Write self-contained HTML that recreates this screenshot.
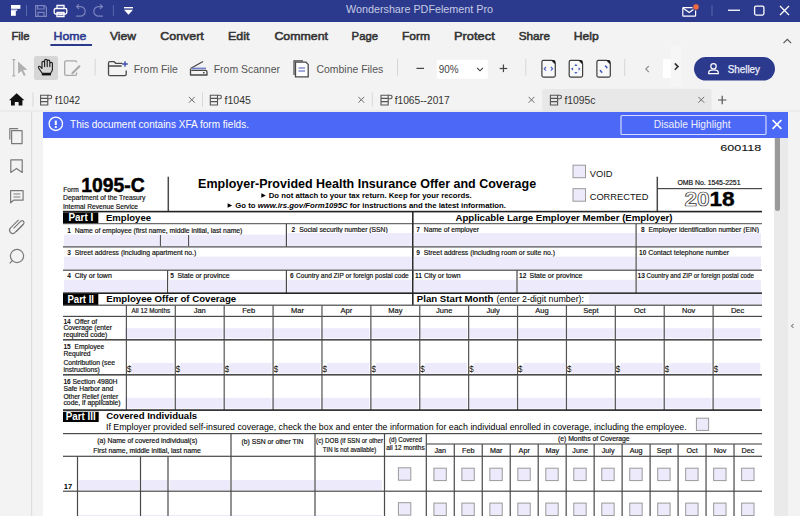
<!DOCTYPE html>
<html><head><meta charset="utf-8"><title>PDFelement</title><style>html,body{margin:0;padding:0;width:800px;height:516px;overflow:hidden;background:#f3f3f3;font-family:"Liberation Sans",sans-serif}</style></head><body><svg width="800" height="516" viewBox="0 0 800 516" style="display:block" font-family='"Liberation Sans", sans-serif'><rect x="0" y="0" width="800" height="516" fill="#f3f3f3" />
<rect x="0" y="0" width="800" height="22" fill="#2c3a8e" />
<rect x="11" y="5" width="9.4" height="3.8" fill="#fff" />
<rect x="11" y="9.6" width="6.2" height="1.2" fill="#fff" />
<rect x="11" y="10.8" width="4.8" height="5" fill="#fff" />
<rect x="26.0" y="5" width="1" height="11" fill="#5b65a9" />
<g fill="none" stroke="#7b83bd" stroke-width="1.2"><path d="M35.6 5.6h9l1.8 1.8v9h-10.8z"/><path d="M37.6 5.6v3.4h6.4v-3.4"/><path d="M38 16.4v-4h6v4"/></g>
<g fill="none" stroke="#fff" stroke-width="1.3"><path d="M57 8.5v-3h7v3"/><rect x="54.2" y="8.5" width="12.6" height="5.5" rx="1.5"/><path d="M57 12.5h7v4h-7z"/></g>
<rect x="58.5" y="14" width="4" height="1.2" fill="#fff" />
<g fill="none" stroke="#7b83bd" stroke-width="1.2" stroke-linecap="round" stroke-linejoin="round"><path d="M76.6 6.6H80.4A4.8 4.8 0 0 1 80.4 16.2H76.6"/><path d="M78.6 4.6L76.6 6.6L78.6 8.6"/><path d="M102.4 6.6H98.6A4.8 4.8 0 0 0 98.6 16.2H102.4"/><path d="M100.4 4.6L102.4 6.6L100.4 8.6"/></g>
<rect x="112.9" y="5" width="1" height="11" fill="#5b65a9" />
<rect x="124" y="7" width="9" height="1.4" fill="#fff" />
<path d="M124 9.8h9l-4.5 5z" fill="#fff"/>
<text x="346" y="13.3" font-size="11.5" fill="#c6cae3" textLength="147" lengthAdjust="spacingAndGlyphs">Wondershare PDFelement Pro</text>
<g fill="none" stroke="#fff" stroke-width="1.2"><rect x="682.8" y="7.6" width="12.8" height="8.6" rx="0.6"/><path d="M683.2 8.2l6 4.4 6-4.4"/></g>
<circle cx="696" cy="7" r="3.2" fill="#f46a3d" stroke="#2c3a8e" stroke-width="0.8"/>
<rect x="711.5" y="5" width="1" height="11" fill="#5b65a9" />
<rect x="728" y="9.6" width="12" height="1.3" fill="#fff" />
<rect x="754.6" y="6.1" width="9.3" height="9" rx="1.5" fill="none" stroke="#fff" stroke-width="1.3"/>
<path d="M780 6l9 9M789 6l-9 9" stroke="#fff" stroke-width="1.3"/>
<text x="11.4" y="39.6" font-size="11.8" fill="#333" textLength="18.2" lengthAdjust="spacingAndGlyphs" style="stroke:#333;stroke-width:0.55">File</text>
<text x="53.6" y="39.6" font-size="11.8" fill="#2c3a8e" textLength="32.8" lengthAdjust="spacingAndGlyphs" style="stroke:#2c3a8e;stroke-width:0.55">Home</text>
<text x="110" y="39.6" font-size="11.8" fill="#333" textLength="26" lengthAdjust="spacingAndGlyphs" style="stroke:#333;stroke-width:0.55">View</text>
<text x="160.3" y="39.6" font-size="11.8" fill="#333" textLength="43.5" lengthAdjust="spacingAndGlyphs" style="stroke:#333;stroke-width:0.55">Convert</text>
<text x="228" y="39.6" font-size="11.8" fill="#333" textLength="21.4" lengthAdjust="spacingAndGlyphs" style="stroke:#333;stroke-width:0.55">Edit</text>
<text x="274.4" y="39.6" font-size="11.8" fill="#333" textLength="53.6" lengthAdjust="spacingAndGlyphs" style="stroke:#333;stroke-width:0.55">Comment</text>
<text x="351.6" y="39.6" font-size="11.8" fill="#333" textLength="26.4" lengthAdjust="spacingAndGlyphs" style="stroke:#333;stroke-width:0.55">Page</text>
<text x="402" y="39.6" font-size="11.8" fill="#333" textLength="28" lengthAdjust="spacingAndGlyphs" style="stroke:#333;stroke-width:0.55">Form</text>
<text x="454" y="39.6" font-size="11.8" fill="#333" textLength="40.7" lengthAdjust="spacingAndGlyphs" style="stroke:#333;stroke-width:0.55">Protect</text>
<text x="518.75" y="39.6" font-size="11.8" fill="#333" textLength="31.25" lengthAdjust="spacingAndGlyphs" style="stroke:#333;stroke-width:0.55">Share</text>
<text x="573.75" y="39.6" font-size="11.8" fill="#333" textLength="25" lengthAdjust="spacingAndGlyphs" style="stroke:#333;stroke-width:0.55">Help</text>
<rect x="50.4" y="44" width="41.6" height="2" fill="#2c3a8e" />
<path d="M783.5 43.2l3.8-3.8 3.8 3.8" fill="none" stroke="#555" stroke-width="1.2"/>
<g fill="none" stroke="#b0b0b0" stroke-width="1.2"><path d="M12.3 59.6h3M13.8 59.6v16.2M12.3 75.8h3"/></g>
<path d="M18 61.5l9.3 8.3-4.2 0.3 2.6 5-1.8 0.9-2.5-5.1-3.3 2.8z" fill="#b0b0b0"/>
<rect x="34" y="56" width="24" height="24" rx="2" fill="#d6d6d6"/>
<path d="M42.2 73.3C41 71.5 38.6 68.6 38.4 67.4C38.3 66.3 39.4 65.9 40.2 66.6L42 68.4V62.6A1.3 1.3 0 0 1 44.6 62.6V66.6V60.6A1.3 1.3 0 0 1 47.2 60.6V66.6V61.4A1.3 1.3 0 0 1 49.8 61.4V66.6V63.6A1.3 1.3 0 0 1 52.4 63.6V69.3C52.4 71 51.6 72.2 50.6 73.3Z" fill="none" stroke="#1e1e1e" stroke-width="1.15" stroke-linejoin="round"/>
<rect x="41.8" y="73.6" width="9.2" height="1.8" fill="#111" />
<path d="M76.6 62.6V62.2Q76.6 60.9 75.3 60.9H66Q64.7 60.9 64.7 62.2V74.1Q64.7 75.4 66 75.4H75.3Q76.6 75.4 76.6 74.1V72.4" fill="none" stroke="#a8a8a8" stroke-width="1.3"/>
<path d="M72.4 73.2L79.4 66.2" stroke="#a8a8a8" stroke-width="2" stroke-linecap="round"/>
<rect x="94.7" y="59" width="1" height="16.5" fill="#d6d6d6" />
<g fill="none" stroke="#484848" stroke-width="1.3" stroke-linejoin="round"><path d="M109.8 75.6Q108.5 75.6 108.5 74.3V63Q108.5 61.7 109.8 61.7H114.1L115.6 63.3H122.4"/><path d="M108.5 66H121.7M126.2 70.5V74.3Q126.2 75.6 124.9 75.6H109.8"/></g>
<path d="M125 61.2v5.6M122.2 64h5.6" stroke="#3e4fb0" stroke-width="1.4"/>
<text x="133.75" y="73" font-size="10.6" fill="#555" textLength="44" lengthAdjust="spacingAndGlyphs">From File</text>
<g fill="none" stroke="#484848" stroke-width="1.3" stroke-linejoin="round"><path d="M190.5 68.5l12.5-7"/><path d="M190.5 69v6h16.5v-3c0-1-0.6-1.6-1.6-1.6h-14"/></g>
<rect x="192" y="67.6" width="14" height="1.6" fill="#6f7fc9" />
<rect x="203" y="72" width="1.6" height="1.4" fill="#484848" />
<text x="213.7" y="73" font-size="10.6" fill="#555" textLength="66.3" lengthAdjust="spacingAndGlyphs">From Scanner</text>
<g fill="none" stroke="#484848" stroke-width="1.2"><path d="M294 75v-14.2h9"/></g>
<path d="M295.5 76.8v-14.6h10.5l2.2 2.2v12.4z" fill="#fff" stroke="#484848" stroke-width="1.3"/>
<path d="M298.5 68h6.5M298.5 71h6.5" stroke="#4456b6" stroke-width="1.1"/>
<text x="316.5" y="73" font-size="10.6" fill="#555" textLength="66.7" lengthAdjust="spacingAndGlyphs">Combine Files</text>
<rect x="397.0" y="59" width="1" height="16.5" fill="#d6d6d6" />
<rect x="416.5" y="67.8" width="7.5" height="1.2" fill="#444" />
<rect x="436.7" y="59.7" width="51" height="19.1" fill="#fff" />
<text x="438.7" y="73" font-size="10.4" fill="#444" textLength="19.8" lengthAdjust="spacingAndGlyphs">90%</text>
<path d="M477.2 68l2.8 2.8 2.8-2.8" fill="none" stroke="#444" stroke-width="1.1"/>
<rect x="499.7" y="67.9" width="7.5" height="1.2" fill="#444" />
<rect x="502.85" y="64.5" width="1.2" height="7.6" fill="#444" />
<rect x="525.3" y="59" width="1" height="16.5" fill="#d6d6d6" />
<path d="M543.4000000000001 60.4H551.8000000000001L555.3000000000001 63.9V75.6Q555.3000000000001 77.1 553.8000000000001 77.1H543.4000000000001Q541.9000000000001 77.1 541.9000000000001 75.6V61.9Q541.9000000000001 60.4 543.4000000000001 60.4Z" fill="#f8f8f8" stroke="#3d3d3d" stroke-width="1.2" stroke-linejoin="round"/>
<path d="M551.6 60.1L555.6 64.1V62.4Q555.6 60.1 553.3000000000001 60.1Z" fill="#111"/>
<path d="M570.7 60.4H579.1L582.6 63.9V75.6Q582.6 77.1 581.1 77.1H570.7Q569.2 77.1 569.2 75.6V61.9Q569.2 60.4 570.7 60.4Z" fill="#f8f8f8" stroke="#3d3d3d" stroke-width="1.2" stroke-linejoin="round"/>
<path d="M578.9 60.1L582.9 64.1V62.4Q582.9 60.1 580.6 60.1Z" fill="#111"/>
<path d="M598.4000000000001 60.4H606.8000000000001L610.3000000000001 63.9V75.6Q610.3000000000001 77.1 608.8000000000001 77.1H598.4000000000001Q596.9000000000001 77.1 596.9000000000001 75.6V61.9Q596.9000000000001 60.4 598.4000000000001 60.4Z" fill="#f8f8f8" stroke="#3d3d3d" stroke-width="1.2" stroke-linejoin="round"/>
<path d="M606.6 60.1L610.6 64.1V62.4Q610.6 60.1 608.3000000000001 60.1Z" fill="#111"/>
<path d="M546.0 67l-1.8 1.8 1.8 1.8M550.8000000000001 67l1.8 1.8-1.8 1.8" fill="none" stroke="#4a5cc0" stroke-width="1.1"/>
<path d="M575.9 63.7l1.6 2.2h-3.2zM575.9 74.1l1.6-2.2h-3.2zM570.9 68.9l2.2-1.6v3.2zM580.7 68.9l-2.2-1.6v3.2z" fill="#4a5cc0"/>
<path d="M605.0 65.7A3.9 3.9 0 0 1 607.1 68.3M602.3000000000001 72.6A3.9 3.9 0 0 1 600.2 70" fill="none" stroke="#4a5cc0" stroke-width="1.6"/>
<rect x="624.2" y="59" width="1" height="17" fill="#d6d6d6" />
<path d="M648.8 66l-3 3 3 3" fill="none" stroke="#8f8f8f" stroke-width="1.1"/>
<rect x="671" y="45.5" width="10" height="41.5" fill="#f6f6f6" />
<rect x="663" y="59" width="8" height="19" fill="#fff" />
<path d="M674.8 63.4l3.2 3.2-3.2 3.2" fill="none" stroke="#333" stroke-width="1.6"/>
<rect x="694" y="57" width="81" height="23.6" rx="11.8" fill="#2c3a8e"/>
<g fill="none" stroke="#fff" stroke-width="1.2"><circle cx="713.5" cy="66.3" r="2.7"/><path d="M708.7 73.6v-1.2c0-1.6 2-2.6 4.8-2.6s4.8 1 4.8 2.6v1.2z"/></g>
<text x="727.7" y="72.7" font-size="10.8" fill="#eef0fa" textLength="32.3" lengthAdjust="spacingAndGlyphs" style="stroke:#eef0fa;stroke-width:0.25">Shelley</text>
<rect x="542.2" y="89" width="169.3" height="24" fill="#e8e8e8" rx="3"/>
<rect x="0" y="110.5" width="800" height="1" fill="#e3e3e3" />
<path d="M9 100.2l7.7-6.9 7.7 6.9h-2v5.3h-3.8v-3.6h-3.8v3.6h-3.8v-5.3z" fill="#111"/>
<rect x="32.5" y="92.5" width="1" height="14.299999999999997" fill="#d8d8d8" />
<g fill="none" stroke="#555" stroke-width="1.1"><path d="M40.6 95.3h7.2v9.7h-7.2z"/><path d="M40.6 98.4h7.2M40.6 101.6h7.2"/><path d="M47.8 95.3h2.2a1.7 1.7 0 0 1 0 3.4h-2.2"/></g>
<text x="55" y="103.6" font-size="10.6" fill="#333" textLength="25" lengthAdjust="spacingAndGlyphs">f1042</text>
<path d="M188.9 96.9l5.8 5.8M194.70000000000002 96.9l-5.8 5.8" stroke="#6a6a6a" stroke-width="1"/>
<rect x="202.0" y="92.5" width="1" height="14.299999999999997" fill="#d8d8d8" />
<g fill="none" stroke="#555" stroke-width="1.1"><path d="M210.29999999999998 95.3h7.2v9.7h-7.2z"/><path d="M210.29999999999998 98.4h7.2M210.29999999999998 101.6h7.2"/><path d="M217.5 95.3h2.2a1.7 1.7 0 0 1 0 3.4h-2.2"/></g>
<text x="224.5" y="103.6" font-size="10.6" fill="#333" textLength="26.4" lengthAdjust="spacingAndGlyphs">f1045</text>
<path d="M358.40000000000003 96.9l5.8 5.8M364.2 96.9l-5.8 5.8" stroke="#6a6a6a" stroke-width="1"/>
<rect x="371.8" y="92.5" width="1" height="14.299999999999997" fill="#d8d8d8" />
<g fill="none" stroke="#555" stroke-width="1.1"><path d="M381.0 95.3h7.2v9.7h-7.2z"/><path d="M381.0 98.4h7.2M381.0 101.6h7.2"/><path d="M388.2 95.3h2.2a1.7 1.7 0 0 1 0 3.4h-2.2"/></g>
<text x="394.7" y="103.6" font-size="10.6" fill="#333" textLength="55" lengthAdjust="spacingAndGlyphs">f1065--2017</text>
<path d="M528.6 96.9l5.8 5.8M534.4 96.9l-5.8 5.8" stroke="#6a6a6a" stroke-width="1"/>
<g fill="none" stroke="#555" stroke-width="1.1"><path d="M550.4 95.3h7.2v9.7h-7.2z"/><path d="M550.4 98.4h7.2M550.4 101.6h7.2"/><path d="M557.5999999999999 95.3h2.2a1.7 1.7 0 0 1 0 3.4h-2.2"/></g>
<text x="564.4" y="103.6" font-size="10.6" fill="#333" textLength="31" lengthAdjust="spacingAndGlyphs">f1095c</text>
<path d="M698.4 96.9l5.8 5.8M704.1999999999999 96.9l-5.8 5.8" stroke="#6a6a6a" stroke-width="1"/>
<path d="M718 100h8.4M722.2 95.8v8.4" stroke="#555" stroke-width="1.2"/>
<rect x="31.0" y="111.5" width="1.2" height="404.5" fill="#dedede" />
<g fill="none" stroke="#7a7a7a" stroke-width="1.2" stroke-linejoin="round"><path d="M11.6 130.6h10.5v13h-10.5z"/><path d="M9.8 139.5v-10.8h8.3"/><path d="M10.8 159.8h11.4v12.6l-5.7-4-5.7 4z"/><path d="M10.6 190.6h12.5v9.6h-9.5l-3 2.6z"/><path d="M13.5 194h6.8M13.5 197h6.8"/><path d="M13.6 228.3l7.2-7.2a2 2 0 0 1 2.8 2.8l-8.8 8.8a3.2 3.2 0 0 1-4.5-4.5l8.3-8.3"/><path d="M16 231.8l7.4-7.4"/><circle cx="17" cy="256" r="6.6"/><path d="M12.3 260.7l-2.6 2.6"/></g>
<rect x="43" y="138" width="731" height="378" fill="#fff" />
<rect x="774" y="138" width="14" height="378" fill="#eaeaea" />
<rect x="775" y="134" width="5" height="77" rx="2.5" fill="#9a9a9a"/>
<path d="M793.6 324l-2.2 1.9 2.2 1.9" fill="none" stroke="#8a8a8a" stroke-width="1.1"/>
<rect x="43" y="112" width="745" height="26" fill="#4c68f6" />
<circle cx="55.8" cy="123.8" r="6.7" fill="none" stroke="#fff" stroke-width="1.3"/>
<rect x="54.8" y="120.6" width="2" height="4.4" fill="#fff" />
<rect x="54.8" y="126.1" width="2" height="1.9" fill="#fff" />
<text x="70" y="127.6" font-size="10.6" fill="#fff" textLength="179" lengthAdjust="spacingAndGlyphs">This document contains XFA form fields.</text>
<rect x="621" y="115.5" width="145" height="19" fill="none" stroke="#d3d9ff" stroke-width="1.2" rx="1"/>
<text x="653.8" y="128.2" font-size="10.4" fill="#eef0ff" textLength="76.7" lengthAdjust="spacingAndGlyphs">Disable Highlight</text>
<path d="M772.6 120l8.8 8.8M781.4 120l-8.8 8.8" stroke="#fff" stroke-width="1.7"/>
<text x="720.2" y="151.3" font-size="9.8" fill="#111" textLength="41" lengthAdjust="spacingAndGlyphs" font-family=""Liberation Mono", monospace" style="stroke:#111;stroke-width:0.1">600118</text>
<text x="63.2" y="192.2" font-size="6.6" fill="#111" textLength="15.5" lengthAdjust="spacingAndGlyphs" style="stroke:#111;stroke-width:0.18">Form</text>
<text x="81.2" y="192.2" font-size="20.6" font-weight="700" textLength="63.5" lengthAdjust="spacingAndGlyphs" style="stroke:#000;stroke-width:0.5">1095-C</text>
<text x="63" y="200" font-size="6.8" fill="#111" textLength="82.5" lengthAdjust="spacingAndGlyphs" style="stroke:#111;stroke-width:0.18">Department of the Treasury</text>
<text x="63" y="209.3" font-size="6.8" fill="#111" textLength="75" lengthAdjust="spacingAndGlyphs" style="stroke:#111;stroke-width:0.18">Internal Revenue Service</text>
<rect x="167.55" y="176.7" width="1.5" height="34.80000000000001" fill="#4a4a4a" />
<text x="198.1" y="188" font-size="12.2" font-weight="700" textLength="338" lengthAdjust="spacingAndGlyphs">Employer-Provided Health Insurance Offer and Coverage</text>
<path d="M261.3 193.3L265.8 195.5L261.3 197.7Z" fill="#000"/>
<text x="268.75" y="198" font-size="7.5" font-weight="700" textLength="203" lengthAdjust="spacingAndGlyphs">Do not attach to your tax return. Keep for your records.</text>
<path d="M227.6 203.3L232.1 205.5L227.6 207.7Z" fill="#000"/>
<text x="235.25" y="208.25" font-size="7.5" font-weight="700" textLength="270.75" lengthAdjust="spacingAndGlyphs">Go to <tspan font-style="italic">www.irs.gov/Form1095C</tspan> for instructions and the latest information.</text>
<rect x="573" y="165.2" width="12.5" height="12.5" fill="#edeafc" stroke="#9a9a9a" stroke-width="1"/>
<rect x="573" y="188.7" width="12.5" height="12.5" fill="#edeafc" stroke="#9a9a9a" stroke-width="1"/>
<text x="589.7" y="176.7" font-size="9.3" fill="#111" textLength="22.8" lengthAdjust="spacingAndGlyphs">VOID</text>
<text x="589.7" y="200" font-size="9.3" fill="#111" textLength="58.8" lengthAdjust="spacingAndGlyphs">CORRECTED</text>
<rect x="656.55" y="176.7" width="1.5" height="34.80000000000001" fill="#4a4a4a" />
<rect x="657.3" y="188.0" width="104.70000000000005" height="1.2" fill="#4a4a4a" />
<text x="677.5" y="184.5" font-size="6.8" fill="#111" textLength="63" lengthAdjust="spacingAndGlyphs" style="stroke:#111;stroke-width:0.18">OMB No. 1545-2251</text>
<text x="684.4" y="206.3" font-size="19.5" font-weight="700" textLength="50.3" lengthAdjust="spacingAndGlyphs"><tspan fill="#fff" stroke="#333" stroke-width="0.7">20</tspan><tspan fill="#000" stroke="#000" stroke-width="0.4">18</tspan></text>
<rect x="63" y="210.79999999999998" width="699" height="1.6" fill="#222" />
<rect x="63" y="212.4" width="35.3" height="11" fill="#000" />
<text x="68.5" y="221" font-size="10" font-weight="700" fill="#fff" textLength="24.7" lengthAdjust="spacingAndGlyphs">Part I</text>
<text x="106" y="220.6" font-size="9.5" font-weight="700" textLength="45" lengthAdjust="spacingAndGlyphs">Employee</text>
<text x="455.5" y="221.2" font-size="9.6" font-weight="700" textLength="217" lengthAdjust="spacingAndGlyphs">Applicable Large Employer Member (Employer)</text>
<rect x="63" y="223.2" width="699" height="1" fill="#4a4a4a" />
<rect x="412.0" y="211.5" width="1.6" height="93.5" fill="#2a2a2a" />
<text x="67.2" y="232.6" font-size="6.6" font-weight="700" fill="#111">1</text>
<text x="74.7" y="232.6" font-size="6.6" fill="#111" textLength="167.7" lengthAdjust="spacingAndGlyphs" style="stroke:#111;stroke-width:0.18">Name of employee (first name, middle initial, last name)</text>
<rect x="64" y="234.6" width="221.60000000000002" height="11.700000000000017" fill="#edeafc" />
<rect x="159.9" y="235" width="1" height="11.300000000000011" fill="#444" />
<rect x="188.1" y="235" width="1" height="11.300000000000011" fill="#444" />
<text x="291.5" y="232.3" font-size="6.6" font-weight="700" fill="#111">2</text>
<text x="299.2" y="232.3" font-size="6.6" fill="#111" textLength="88.5" lengthAdjust="spacingAndGlyphs" style="stroke:#111;stroke-width:0.18">Social security number (SSN)</text>
<rect x="287.3" y="233" width="124.5" height="13.300000000000011" fill="#edeafc" />
<text x="416.3" y="232.3" font-size="6.6" font-weight="700" fill="#111">7</text>
<text x="423.8" y="232.3" font-size="6.6" fill="#111" textLength="55.2" lengthAdjust="spacingAndGlyphs" style="stroke:#111;stroke-width:0.18">Name of employer</text>
<rect x="413.8" y="233" width="221.40000000000003" height="13.300000000000011" fill="#edeafc" />
<text x="641" y="232.3" font-size="6.6" font-weight="700" fill="#111">8</text>
<text x="648.5" y="232.3" font-size="6.6" fill="#111" textLength="110.5" lengthAdjust="spacingAndGlyphs" style="stroke:#111;stroke-width:0.18">Employer identification number (EIN)</text>
<rect x="637" y="233" width="124" height="13.300000000000011" fill="#edeafc" />
<rect x="285.79999999999995" y="223.7" width="1.2" height="23.100000000000023" fill="#4a4a4a" />
<rect x="635.5" y="223.7" width="1.2" height="23.100000000000023" fill="#4a4a4a" />
<rect x="63" y="246.3" width="699" height="1.2" fill="#4a4a4a" />
<text x="67.2" y="254.7" font-size="6.6" font-weight="700" fill="#111">3</text>
<text x="74.7" y="254.7" font-size="6.6" fill="#111" textLength="121.6" lengthAdjust="spacingAndGlyphs" style="stroke:#111;stroke-width:0.18">Street address (including apartment no.)</text>
<rect x="64" y="256.6" width="347.8" height="13.0" fill="#edeafc" />
<text x="416.3" y="254.7" font-size="6.6" font-weight="700" fill="#111">9</text>
<text x="423.8" y="254.7" font-size="6.6" fill="#111" textLength="131.2" lengthAdjust="spacingAndGlyphs" style="stroke:#111;stroke-width:0.18">Street address (including room or suite no.)</text>
<rect x="413.8" y="256.6" width="221.40000000000003" height="13.0" fill="#edeafc" />
<text x="639" y="254.7" font-size="6.6" font-weight="700" fill="#111">10</text>
<text x="648.3" y="254.7" font-size="6.6" fill="#111" textLength="80.7" lengthAdjust="spacingAndGlyphs" style="stroke:#111;stroke-width:0.18">Contact telephone number</text>
<rect x="637" y="256.6" width="124" height="13.0" fill="#edeafc" />
<rect x="635.5" y="246.8" width="1.2" height="23.399999999999977" fill="#4a4a4a" />
<rect x="63" y="269.59999999999997" width="699" height="1.2" fill="#4a4a4a" />
<text x="67.2" y="278.2" font-size="6.6" font-weight="700" fill="#111">4</text>
<text x="74.7" y="278.2" font-size="6.6" fill="#111" textLength="37.1" lengthAdjust="spacingAndGlyphs" style="stroke:#111;stroke-width:0.18">City or town</text>
<rect x="64" y="279.8" width="102.80000000000001" height="12.800000000000011" fill="#edeafc" />
<rect x="167.0" y="270.2" width="1.2" height="22.80000000000001" fill="#4a4a4a" />
<text x="170.2" y="278.2" font-size="6.6" font-weight="700" fill="#111">5</text>
<text x="177.5" y="278.2" font-size="6.6" fill="#111" textLength="52.1" lengthAdjust="spacingAndGlyphs" style="stroke:#111;stroke-width:0.18">State or province</text>
<rect x="168.6" y="279.8" width="117.00000000000003" height="12.800000000000011" fill="#edeafc" />
<rect x="285.79999999999995" y="270.2" width="1.2" height="22.80000000000001" fill="#4a4a4a" />
<text x="290" y="278.2" font-size="6.6" font-weight="700" fill="#111">6</text>
<text x="296" y="278.2" font-size="6.6" fill="#111" textLength="112.7" lengthAdjust="spacingAndGlyphs" style="stroke:#111;stroke-width:0.18">Country and ZIP or foreign postal code</text>
<rect x="287.3" y="279.8" width="124.5" height="12.800000000000011" fill="#edeafc" />
<text x="415" y="278.2" font-size="6.6" font-weight="700" fill="#111">11</text>
<text x="424" y="278.2" font-size="6.6" fill="#111" textLength="36.5" lengthAdjust="spacingAndGlyphs" style="stroke:#111;stroke-width:0.18">City or town</text>
<rect x="413.8" y="279.8" width="102.40000000000003" height="12.800000000000011" fill="#edeafc" />
<rect x="516.4" y="270.2" width="1.2" height="22.80000000000001" fill="#4a4a4a" />
<text x="519" y="278.2" font-size="6.6" font-weight="700" fill="#111">12</text>
<text x="529.5" y="278.2" font-size="6.6" fill="#111" textLength="53" lengthAdjust="spacingAndGlyphs" style="stroke:#111;stroke-width:0.18">State or province</text>
<rect x="518" y="279.8" width="117.20000000000005" height="12.800000000000011" fill="#edeafc" />
<rect x="635.5" y="270.2" width="1.2" height="22.80000000000001" fill="#4a4a4a" />
<text x="637.5" y="278.2" font-size="6.6" font-weight="700" fill="#111">13</text>
<text x="646.6" y="278.2" font-size="6.6" fill="#111" textLength="107.4" lengthAdjust="spacingAndGlyphs" style="stroke:#111;stroke-width:0.18">Country and ZIP or foreign postal code</text>
<rect x="637" y="279.8" width="124" height="12.800000000000011" fill="#edeafc" />
<rect x="63" y="292.4" width="699" height="1.6" fill="#222" />
<rect x="63" y="294" width="35.3" height="11.2" fill="#000" />
<text x="67.5" y="302.5" font-size="10" font-weight="700" fill="#fff" textLength="26.5" lengthAdjust="spacingAndGlyphs">Part II</text>
<text x="106.25" y="302.1" font-size="9.5" font-weight="700" textLength="130" lengthAdjust="spacingAndGlyphs">Employee Offer of Coverage</text>
<text x="416.8" y="301.9" font-size="9.5" font-weight="700" textLength="76.7" lengthAdjust="spacingAndGlyphs">Plan Start Month</text>
<text x="496.5" y="301.9" font-size="8.6" textLength="87.5" lengthAdjust="spacingAndGlyphs">(enter 2-digit number):</text>
<rect x="589" y="293.9" width="173" height="10.700000000000045" fill="#edeafc" />
<rect x="63" y="304.59999999999997" width="699" height="1.2" fill="#4a4a4a" />
<text x="150.84615384615387" y="312.6" font-size="6.8" fill="#111" textLength="38.5" lengthAdjust="spacingAndGlyphs" text-anchor="middle" style="stroke:#111;stroke-width:0.18">All 12 Months</text>
<text x="199.73846153846154" y="312.7" font-size="7.5" fill="#111" text-anchor="middle" style="stroke:#111;stroke-width:0.18">Jan</text>
<text x="248.63076923076926" y="312.7" font-size="7.5" fill="#111" text-anchor="middle" style="stroke:#111;stroke-width:0.18">Feb</text>
<text x="297.5230769230769" y="312.7" font-size="7.5" fill="#111" text-anchor="middle" style="stroke:#111;stroke-width:0.18">Mar</text>
<text x="346.4153846153846" y="312.7" font-size="7.5" fill="#111" text-anchor="middle" style="stroke:#111;stroke-width:0.18">Apr</text>
<text x="395.3076923076923" y="312.7" font-size="7.5" fill="#111" text-anchor="middle" style="stroke:#111;stroke-width:0.18">May</text>
<text x="444.20000000000005" y="312.7" font-size="7.5" fill="#111" text-anchor="middle" style="stroke:#111;stroke-width:0.18">June</text>
<text x="493.0923076923077" y="312.7" font-size="7.5" fill="#111" text-anchor="middle" style="stroke:#111;stroke-width:0.18">July</text>
<text x="541.9846153846154" y="312.7" font-size="7.5" fill="#111" text-anchor="middle" style="stroke:#111;stroke-width:0.18">Aug</text>
<text x="590.876923076923" y="312.7" font-size="7.5" fill="#111" text-anchor="middle" style="stroke:#111;stroke-width:0.18">Sept</text>
<text x="639.7692307692308" y="312.7" font-size="7.5" fill="#111" text-anchor="middle" style="stroke:#111;stroke-width:0.18">Oct</text>
<text x="688.6615384615385" y="312.7" font-size="7.5" fill="#111" text-anchor="middle" style="stroke:#111;stroke-width:0.18">Nov</text>
<text x="737.5538461538462" y="312.7" font-size="7.5" fill="#111" text-anchor="middle" style="stroke:#111;stroke-width:0.18">Dec</text>
<rect x="63" y="315.79999999999995" width="699" height="1.2" fill="#4a4a4a" />
<rect x="125.4" y="328.2" width="48.2923076923077" height="10.0" fill="#edeafc" />
<text x="126.7" y="371.7" font-size="9.2" fill="#111">$</text>
<rect x="131.4" y="363" width="42.2923076923077" height="10.600000000000023" fill="#edeafc" />
<rect x="125.4" y="397.8" width="48.2923076923077" height="10.699999999999989" fill="#edeafc" />
<rect x="174.2923076923077" y="328.2" width="48.2923076923077" height="10.0" fill="#edeafc" />
<text x="175.5923076923077" y="371.7" font-size="9.2" fill="#111">$</text>
<rect x="180.2923076923077" y="363" width="42.2923076923077" height="10.600000000000023" fill="#edeafc" />
<rect x="174.2923076923077" y="397.8" width="48.2923076923077" height="10.699999999999989" fill="#edeafc" />
<rect x="223.1846153846154" y="328.2" width="48.29230769230767" height="10.0" fill="#edeafc" />
<text x="224.4846153846154" y="371.7" font-size="9.2" fill="#111">$</text>
<rect x="229.1846153846154" y="363" width="42.29230769230767" height="10.600000000000023" fill="#edeafc" />
<rect x="223.1846153846154" y="397.8" width="48.29230769230767" height="10.699999999999989" fill="#edeafc" />
<rect x="272.0769230769231" y="328.2" width="48.292307692307645" height="10.0" fill="#edeafc" />
<text x="273.3769230769231" y="371.7" font-size="9.2" fill="#111">$</text>
<rect x="278.0769230769231" y="363" width="42.292307692307645" height="10.600000000000023" fill="#edeafc" />
<rect x="272.0769230769231" y="397.8" width="48.292307692307645" height="10.699999999999989" fill="#edeafc" />
<rect x="320.96923076923076" y="328.2" width="48.2923076923077" height="10.0" fill="#edeafc" />
<text x="322.2692307692308" y="371.7" font-size="9.2" fill="#111">$</text>
<rect x="326.96923076923076" y="363" width="42.2923076923077" height="10.600000000000023" fill="#edeafc" />
<rect x="320.96923076923076" y="397.8" width="48.2923076923077" height="10.699999999999989" fill="#edeafc" />
<rect x="369.8615384615385" y="328.2" width="48.2923076923077" height="10.0" fill="#edeafc" />
<text x="371.1615384615385" y="371.7" font-size="9.2" fill="#111">$</text>
<rect x="375.8615384615385" y="363" width="42.2923076923077" height="10.600000000000023" fill="#edeafc" />
<rect x="369.8615384615385" y="397.8" width="48.2923076923077" height="10.699999999999989" fill="#edeafc" />
<rect x="418.7538461538462" y="328.2" width="48.292307692307645" height="10.0" fill="#edeafc" />
<text x="420.0538461538462" y="371.7" font-size="9.2" fill="#111">$</text>
<rect x="424.7538461538462" y="363" width="42.292307692307645" height="10.600000000000023" fill="#edeafc" />
<rect x="418.7538461538462" y="397.8" width="48.292307692307645" height="10.699999999999989" fill="#edeafc" />
<rect x="467.6461538461539" y="328.2" width="48.292307692307645" height="10.0" fill="#edeafc" />
<text x="468.9461538461539" y="371.7" font-size="9.2" fill="#111">$</text>
<rect x="473.6461538461539" y="363" width="42.292307692307645" height="10.600000000000023" fill="#edeafc" />
<rect x="467.6461538461539" y="397.8" width="48.292307692307645" height="10.699999999999989" fill="#edeafc" />
<rect x="516.5384615384615" y="328.2" width="48.292307692307645" height="10.0" fill="#edeafc" />
<text x="517.8384615384615" y="371.7" font-size="9.2" fill="#111">$</text>
<rect x="522.5384615384615" y="363" width="42.292307692307645" height="10.600000000000023" fill="#edeafc" />
<rect x="516.5384615384615" y="397.8" width="48.292307692307645" height="10.699999999999989" fill="#edeafc" />
<rect x="565.4307692307692" y="328.2" width="48.29230769230776" height="10.0" fill="#edeafc" />
<text x="566.7307692307692" y="371.7" font-size="9.2" fill="#111">$</text>
<rect x="571.4307692307692" y="363" width="42.29230769230776" height="10.600000000000023" fill="#edeafc" />
<rect x="565.4307692307692" y="397.8" width="48.29230769230776" height="10.699999999999989" fill="#edeafc" />
<rect x="614.323076923077" y="328.2" width="48.292307692307645" height="10.0" fill="#edeafc" />
<text x="615.623076923077" y="371.7" font-size="9.2" fill="#111">$</text>
<rect x="620.323076923077" y="363" width="42.292307692307645" height="10.600000000000023" fill="#edeafc" />
<rect x="614.323076923077" y="397.8" width="48.292307692307645" height="10.699999999999989" fill="#edeafc" />
<rect x="663.2153846153847" y="328.2" width="48.292307692307645" height="10.0" fill="#edeafc" />
<text x="664.5153846153846" y="371.7" font-size="9.2" fill="#111">$</text>
<rect x="669.2153846153847" y="363" width="42.292307692307645" height="10.600000000000023" fill="#edeafc" />
<rect x="663.2153846153847" y="397.8" width="48.292307692307645" height="10.699999999999989" fill="#edeafc" />
<rect x="712.1076923076923" y="328.2" width="48.292307692307645" height="10.0" fill="#edeafc" />
<text x="713.4076923076923" y="371.7" font-size="9.2" fill="#111">$</text>
<rect x="718.1076923076923" y="363" width="42.292307692307645" height="10.600000000000023" fill="#edeafc" />
<rect x="712.1076923076923" y="397.8" width="48.292307692307645" height="10.699999999999989" fill="#edeafc" />
<rect x="125.80000000000001" y="305.2" width="1.2" height="104.80000000000001" fill="#555" />
<rect x="174.6923076923077" y="305.2" width="1.2" height="104.80000000000001" fill="#555" />
<rect x="223.5846153846154" y="305.2" width="1.2" height="104.80000000000001" fill="#555" />
<rect x="272.4769230769231" y="305.2" width="1.2" height="104.80000000000001" fill="#555" />
<rect x="321.36923076923074" y="305.2" width="1.2" height="104.80000000000001" fill="#555" />
<rect x="370.26153846153846" y="305.2" width="1.2" height="104.80000000000001" fill="#555" />
<rect x="419.1538461538462" y="305.2" width="1.2" height="104.80000000000001" fill="#555" />
<rect x="468.04615384615386" y="305.2" width="1.2" height="104.80000000000001" fill="#555" />
<rect x="516.9384615384615" y="305.2" width="1.2" height="104.80000000000001" fill="#555" />
<rect x="565.8307692307692" y="305.2" width="1.2" height="104.80000000000001" fill="#555" />
<rect x="614.723076923077" y="305.2" width="1.2" height="104.80000000000001" fill="#555" />
<rect x="663.6153846153846" y="305.2" width="1.2" height="104.80000000000001" fill="#555" />
<rect x="712.5076923076923" y="305.2" width="1.2" height="104.80000000000001" fill="#555" />
<rect x="63" y="339.0" width="699" height="1.6" fill="#4a4a4a" />
<rect x="63" y="374.0" width="699" height="1.6" fill="#4a4a4a" />
<text x="63.4" y="323.6" font-size="6.6" font-weight="700" fill="#111">14</text>
<text x="74.6" y="323.6" font-size="6.6" fill="#111" textLength="22.6" lengthAdjust="spacingAndGlyphs" style="stroke:#111;stroke-width:0.18">Offer of</text>
<text x="63.4" y="330.4" font-size="6.6" fill="#111" textLength="48.5" lengthAdjust="spacingAndGlyphs" style="stroke:#111;stroke-width:0.18">Coverage (enter</text>
<text x="63.4" y="336.6" font-size="6.6" fill="#111" textLength="44" lengthAdjust="spacingAndGlyphs" style="stroke:#111;stroke-width:0.18">required code)</text>
<text x="63.4" y="349.4" font-size="6.6" font-weight="700" fill="#111">15</text>
<text x="74.6" y="349.4" font-size="6.6" fill="#111" textLength="29.5" lengthAdjust="spacingAndGlyphs" style="stroke:#111;stroke-width:0.18">Employee</text>
<text x="63.4" y="356.3" font-size="6.6" fill="#111" textLength="27.2" lengthAdjust="spacingAndGlyphs" style="stroke:#111;stroke-width:0.18">Required</text>
<text x="63.4" y="364.5" font-size="6.6" fill="#111" textLength="51.6" lengthAdjust="spacingAndGlyphs" style="stroke:#111;stroke-width:0.18">Contribution (see</text>
<text x="63.4" y="371.9" font-size="6.6" fill="#111" textLength="36.4" lengthAdjust="spacingAndGlyphs" style="stroke:#111;stroke-width:0.18">instructions)</text>
<text x="63.4" y="384.4" font-size="6.6" font-weight="700" fill="#111">16</text>
<text x="72.5" y="384.4" font-size="6.6" fill="#111" textLength="45" lengthAdjust="spacingAndGlyphs" style="stroke:#111;stroke-width:0.18">Section 4980H</text>
<text x="63.4" y="391.2" font-size="6.6" fill="#111" textLength="49.8" lengthAdjust="spacingAndGlyphs" style="stroke:#111;stroke-width:0.18">Safe Harbor and</text>
<text x="63.4" y="398.5" font-size="6.6" fill="#111" textLength="54.8" lengthAdjust="spacingAndGlyphs" style="stroke:#111;stroke-width:0.18">Other Relief (enter</text>
<text x="63.4" y="405.1" font-size="6.6" fill="#111" textLength="57.2" lengthAdjust="spacingAndGlyphs" style="stroke:#111;stroke-width:0.18">code, if applicable)</text>
<rect x="63" y="409.3" width="699" height="1.6" fill="#222" />
<rect x="63" y="411.8" width="35.7" height="10.2" fill="#000" />
<text x="65.8" y="420.3" font-size="10.2" font-weight="700" fill="#fff" textLength="29.8" lengthAdjust="spacingAndGlyphs">Part III</text>
<text x="106.2" y="419" font-size="9.5" font-weight="700" textLength="91" lengthAdjust="spacingAndGlyphs">Covered Individuals</text>
<text x="106" y="430" font-size="8.9" textLength="580.7" lengthAdjust="spacingAndGlyphs">If Employer provided self-insured coverage, check the box and enter the information for each individual enrolled in coverage, including the employee.</text>
<rect x="696.4" y="418.2" width="12.2" height="12.2" fill="#edeafc" stroke="#9a9a9a" stroke-width="1"/>
<rect x="63" y="433.0" width="699" height="1.2" fill="#4a4a4a" />
<text x="147.3" y="442.8" font-size="6.6" fill="#111" textLength="100" lengthAdjust="spacingAndGlyphs" text-anchor="middle" style="stroke:#111;stroke-width:0.18">(a) Name of covered individual(s)</text>
<text x="147" y="452.7" font-size="6.6" fill="#111" textLength="107.5" lengthAdjust="spacingAndGlyphs" text-anchor="middle" style="stroke:#111;stroke-width:0.18">First name, middle initial, last name</text>
<text x="272.5" y="443.5" font-size="6.6" fill="#111" textLength="62" lengthAdjust="spacingAndGlyphs" text-anchor="middle" style="stroke:#111;stroke-width:0.18">(b) SSN or other TIN</text>
<text x="349.6" y="443.3" font-size="6.6" fill="#111" textLength="67" lengthAdjust="spacingAndGlyphs" text-anchor="middle" style="stroke:#111;stroke-width:0.18">(c) DOB (if SSN or other</text>
<text x="349.6" y="451.6" font-size="6.6" fill="#111" textLength="53.5" lengthAdjust="spacingAndGlyphs" text-anchor="middle" style="stroke:#111;stroke-width:0.18">TIN is not available)</text>
<text x="405.4" y="441.5" font-size="6.6" fill="#111" textLength="33" lengthAdjust="spacingAndGlyphs" text-anchor="middle" style="stroke:#111;stroke-width:0.18">(d) Covered</text>
<text x="405.4" y="449.8" font-size="6.6" fill="#111" textLength="38.5" lengthAdjust="spacingAndGlyphs" text-anchor="middle" style="stroke:#111;stroke-width:0.18">all 12 months</text>
<text x="593.8" y="440.5" font-size="6.6" fill="#111" textLength="71.7" lengthAdjust="spacingAndGlyphs" text-anchor="middle" style="stroke:#111;stroke-width:0.18">(e) Months of Coverage</text>
<rect x="426.3" y="443.45" width="335.7" height="1.1" fill="#4a4a4a" />
<text x="440.2875" y="453" font-size="7.2" fill="#111" text-anchor="middle" style="stroke:#111;stroke-width:0.18">Jan</text>
<text x="468.26250000000005" y="453" font-size="7.2" fill="#111" text-anchor="middle" style="stroke:#111;stroke-width:0.18">Feb</text>
<text x="496.2375" y="453" font-size="7.2" fill="#111" text-anchor="middle" style="stroke:#111;stroke-width:0.18">Mar</text>
<text x="524.2125" y="453" font-size="7.2" fill="#111" text-anchor="middle" style="stroke:#111;stroke-width:0.18">Apr</text>
<text x="552.1875" y="453" font-size="7.2" fill="#111" text-anchor="middle" style="stroke:#111;stroke-width:0.18">May</text>
<text x="580.1624999999999" y="453" font-size="7.2" fill="#111" text-anchor="middle" style="stroke:#111;stroke-width:0.18">June</text>
<text x="608.1374999999999" y="453" font-size="7.2" fill="#111" text-anchor="middle" style="stroke:#111;stroke-width:0.18">July</text>
<text x="636.1125" y="453" font-size="7.2" fill="#111" text-anchor="middle" style="stroke:#111;stroke-width:0.18">Aug</text>
<text x="664.0875" y="453" font-size="7.2" fill="#111" text-anchor="middle" style="stroke:#111;stroke-width:0.18">Sept</text>
<text x="692.0625" y="453" font-size="7.2" fill="#111" text-anchor="middle" style="stroke:#111;stroke-width:0.18">Oct</text>
<text x="720.0374999999999" y="453" font-size="7.2" fill="#111" text-anchor="middle" style="stroke:#111;stroke-width:0.18">Nov</text>
<text x="748.0124999999999" y="453" font-size="7.2" fill="#111" text-anchor="middle" style="stroke:#111;stroke-width:0.18">Dec</text>
<rect x="63" y="455.7" width="699" height="1.2" fill="#4a4a4a" />
<rect x="78.5" y="480.0" width="60.80000000000001" height="10.0" fill="#edeafc" />
<rect x="141.5" y="480.0" width="25.80000000000001" height="10.0" fill="#edeafc" />
<rect x="169.5" y="480.0" width="60.69999999999999" height="10.0" fill="#edeafc" />
<rect x="232" y="480.0" width="82.19999999999999" height="10.0" fill="#edeafc" />
<rect x="316" y="480.0" width="66" height="10.0" fill="#edeafc" />
<rect x="398.4" y="467.8" width="12.4" height="12.4" fill="#edeafc" stroke="#9a9a9a" stroke-width="1"/>
<rect x="433.90" y="468.20" width="12.4" height="12.4" fill="#edeafc" stroke="#9a9a9a" stroke-width="1"/>
<rect x="461.88" y="468.20" width="12.4" height="12.4" fill="#edeafc" stroke="#9a9a9a" stroke-width="1"/>
<rect x="489.85" y="468.20" width="12.4" height="12.4" fill="#edeafc" stroke="#9a9a9a" stroke-width="1"/>
<rect x="517.83" y="468.20" width="12.4" height="12.4" fill="#edeafc" stroke="#9a9a9a" stroke-width="1"/>
<rect x="545.80" y="468.20" width="12.4" height="12.4" fill="#edeafc" stroke="#9a9a9a" stroke-width="1"/>
<rect x="573.77" y="468.20" width="12.4" height="12.4" fill="#edeafc" stroke="#9a9a9a" stroke-width="1"/>
<rect x="601.75" y="468.20" width="12.4" height="12.4" fill="#edeafc" stroke="#9a9a9a" stroke-width="1"/>
<rect x="629.73" y="468.20" width="12.4" height="12.4" fill="#edeafc" stroke="#9a9a9a" stroke-width="1"/>
<rect x="657.70" y="468.20" width="12.4" height="12.4" fill="#edeafc" stroke="#9a9a9a" stroke-width="1"/>
<rect x="685.68" y="468.20" width="12.4" height="12.4" fill="#edeafc" stroke="#9a9a9a" stroke-width="1"/>
<rect x="713.65" y="468.20" width="12.4" height="12.4" fill="#edeafc" stroke="#9a9a9a" stroke-width="1"/>
<rect x="741.62" y="468.20" width="12.4" height="12.4" fill="#edeafc" stroke="#9a9a9a" stroke-width="1"/>
<rect x="63" y="490.59999999999997" width="699" height="1.2" fill="#4a4a4a" />
<rect x="78.5" y="514.9" width="60.80000000000001" height="10.0" fill="#edeafc" />
<rect x="141.5" y="514.9" width="25.80000000000001" height="10.0" fill="#edeafc" />
<rect x="169.5" y="514.9" width="60.69999999999999" height="10.0" fill="#edeafc" />
<rect x="232" y="514.9" width="82.19999999999999" height="10.0" fill="#edeafc" />
<rect x="316" y="514.9" width="66" height="10.0" fill="#edeafc" />
<rect x="398.4" y="502.7" width="12.4" height="12.4" fill="#edeafc" stroke="#9a9a9a" stroke-width="1"/>
<rect x="433.90" y="503.10" width="12.4" height="12.4" fill="#edeafc" stroke="#9a9a9a" stroke-width="1"/>
<rect x="461.88" y="503.10" width="12.4" height="12.4" fill="#edeafc" stroke="#9a9a9a" stroke-width="1"/>
<rect x="489.85" y="503.10" width="12.4" height="12.4" fill="#edeafc" stroke="#9a9a9a" stroke-width="1"/>
<rect x="517.83" y="503.10" width="12.4" height="12.4" fill="#edeafc" stroke="#9a9a9a" stroke-width="1"/>
<rect x="545.80" y="503.10" width="12.4" height="12.4" fill="#edeafc" stroke="#9a9a9a" stroke-width="1"/>
<rect x="573.77" y="503.10" width="12.4" height="12.4" fill="#edeafc" stroke="#9a9a9a" stroke-width="1"/>
<rect x="601.75" y="503.10" width="12.4" height="12.4" fill="#edeafc" stroke="#9a9a9a" stroke-width="1"/>
<rect x="629.73" y="503.10" width="12.4" height="12.4" fill="#edeafc" stroke="#9a9a9a" stroke-width="1"/>
<rect x="657.70" y="503.10" width="12.4" height="12.4" fill="#edeafc" stroke="#9a9a9a" stroke-width="1"/>
<rect x="685.68" y="503.10" width="12.4" height="12.4" fill="#edeafc" stroke="#9a9a9a" stroke-width="1"/>
<rect x="713.65" y="503.10" width="12.4" height="12.4" fill="#edeafc" stroke="#9a9a9a" stroke-width="1"/>
<rect x="741.62" y="503.10" width="12.4" height="12.4" fill="#edeafc" stroke="#9a9a9a" stroke-width="1"/>
<rect x="63" y="529.4" width="699" height="1.2" fill="#4a4a4a" />
<text x="63.8" y="488.8" font-size="7.6" font-weight="700">17</text>
<rect x="76.9" y="456.3" width="1.2" height="59.69999999999999" fill="#4a4a4a" />
<rect x="139.9" y="456.3" width="1.2" height="59.69999999999999" fill="#4a4a4a" />
<rect x="167.4" y="456.3" width="1.2" height="59.69999999999999" fill="#4a4a4a" />
<rect x="230.4" y="433.6" width="1.2" height="82.39999999999998" fill="#4a4a4a" />
<rect x="314.4" y="433.6" width="1.2" height="82.39999999999998" fill="#4a4a4a" />
<rect x="383.9" y="433.6" width="1.2" height="82.39999999999998" fill="#4a4a4a" />
<rect x="425.7" y="433.6" width="1.2" height="82.39999999999998" fill="#4a4a4a" />
<rect x="453.675" y="444" width="1.2" height="72" fill="#4a4a4a" />
<rect x="481.65" y="444" width="1.2" height="72" fill="#4a4a4a" />
<rect x="509.625" y="444" width="1.2" height="72" fill="#4a4a4a" />
<rect x="537.6" y="444" width="1.2" height="72" fill="#4a4a4a" />
<rect x="565.5749999999999" y="444" width="1.2" height="72" fill="#4a4a4a" />
<rect x="593.55" y="444" width="1.2" height="72" fill="#4a4a4a" />
<rect x="621.525" y="444" width="1.2" height="72" fill="#4a4a4a" />
<rect x="649.5" y="444" width="1.2" height="72" fill="#4a4a4a" />
<rect x="677.475" y="444" width="1.2" height="72" fill="#4a4a4a" />
<rect x="705.4499999999999" y="444" width="1.2" height="72" fill="#4a4a4a" />
<rect x="733.425" y="444" width="1.2" height="72" fill="#4a4a4a" /></svg></body></html>
